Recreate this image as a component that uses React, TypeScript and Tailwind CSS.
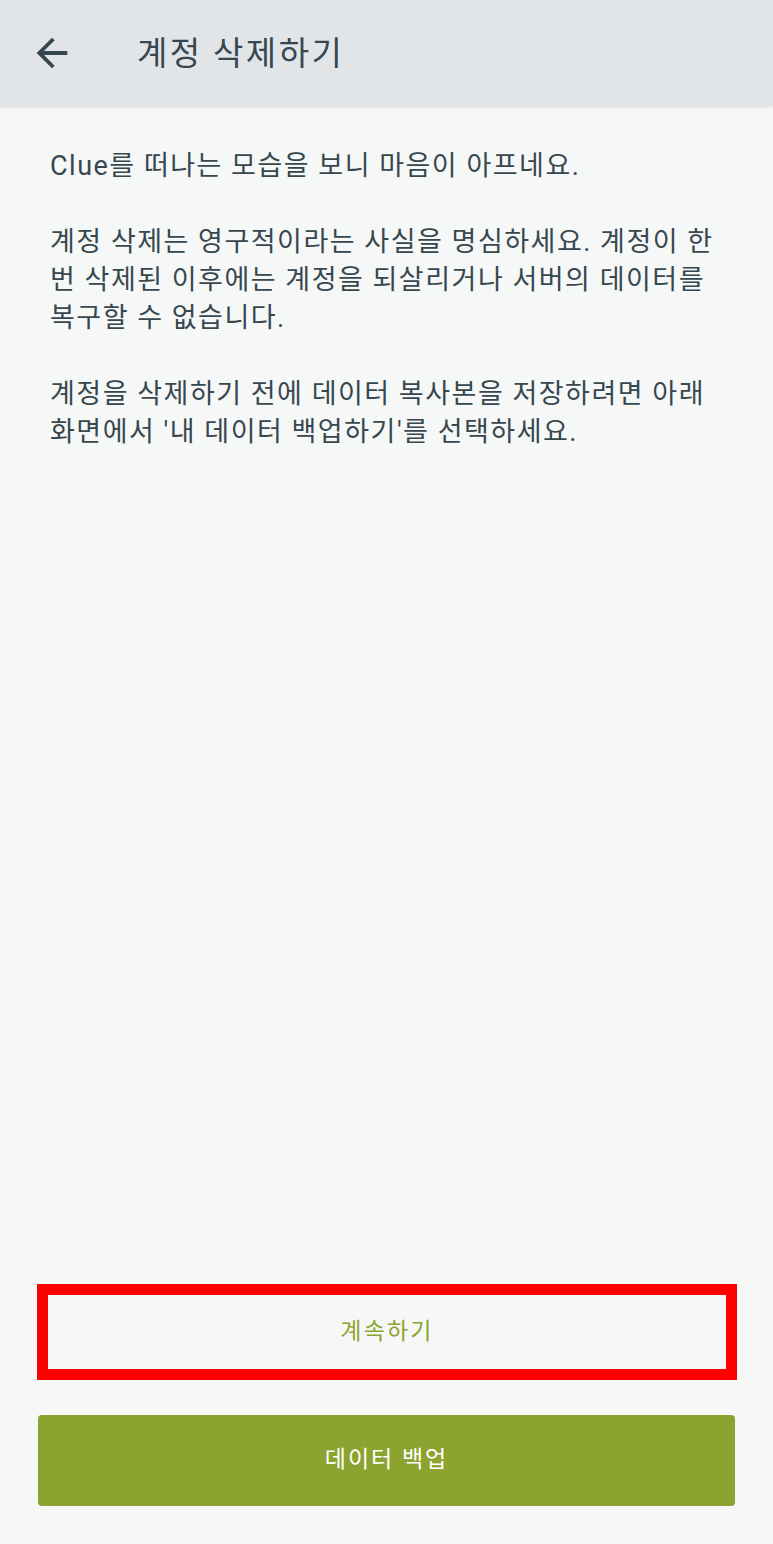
import React from "react";

const font = { fontFamily: 'Roboto, "Noto Sans CJK KR", sans-serif' };

export default function App() {
  return (
    <div
      className="flex flex-col h-[1544px] w-[773px] bg-[#f6f7f7] overflow-hidden"
      style={font}
    >
      <header className="relative z-10 flex items-center h-[106px] shrink-0 bg-[#e1e5e8] shadow-[0_1px_3px_rgba(0,0,0,0.12)]">
        <svg
          viewBox="0 0 24 24"
          className="w-[46px] h-[46px] ml-[29px] shrink-0"
          fill="#37474f"
        >
          <path d="M20 11H7.83l5.59-5.59L12 4l-8 8 8 8 1.41-1.41L7.83 13H20v-2z" />
        </svg>
        <h1 className="ml-[62px] text-[33px] leading-none tracking-[2.4px] text-[#37474f] font-normal">
          계정 삭제하기
        </h1>
      </header>

      <main className="flex-1 flex flex-col px-[50px] pt-[41px]">
        <div className="text-[27px] leading-[38px] tracking-[1.5px] text-[#37474f] whitespace-nowrap">
          <p>Clue를 떠나는 모습을 보니 마음이 아프네요.</p>
          <p className="mt-[38px]">
            계정 삭제는 영구적이라는 사실을 명심하세요. 계정이 한
            <br />
            번 삭제된 이후에는 계정을 되살리거나 서버의 데이터를
            <br />
            복구할 수 없습니다.
          </p>
          <p className="mt-[38px]">
            계정을 삭제하기 전에 데이터 복사본을 저장하려면 아래
            <br />
            화면에서 '내 데이터 백업하기'를 선택하세요.
          </p>
        </div>
      </main>

      <div className="flex flex-col shrink-0 pb-[38px]">
        <button className="ml-[37px] w-[700px] h-[96px] border-[11px] border-[#ff0000] bg-transparent flex items-center justify-center text-[23px] tracking-[2.2px] text-[#8ca42f]">
          계속하기
        </button>
        <button className="ml-[38px] mt-[35px] w-[697px] h-[91px] rounded-[4px] bg-[#8ca42f] flex items-center justify-center text-[23px] tracking-[2px] text-white">
          데이터 백업
        </button>
      </div>
    </div>
  );
}
